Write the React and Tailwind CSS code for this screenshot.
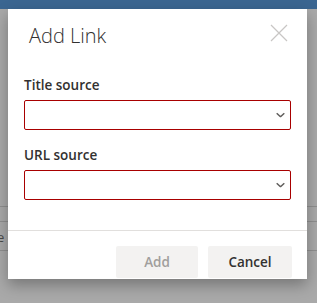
import React from 'react';

const Chevron = () => (
  <svg width="9" height="5" viewBox="0 0 9 5" className="absolute right-[5px] top-1/2 -translate-y-1/2">
    <path d="M0.7 0.7l3.8 3.6 3.8-3.6" fill="none" stroke="#605e5c" strokeWidth="1.5" />
  </svg>
);

const Field = ({ label }) => (
  <div className="flex flex-col">
    <label className="text-[13.5px] font-semibold text-[#323130] leading-[20px] pt-[3px] pb-[5px]">{label}</label>
    <div className="relative h-[30px] border border-[#a80000] rounded-[2px] bg-white">
      <Chevron />
    </div>
  </div>
);

export default function App() {
  return (
    <div
      className="relative w-[317px] h-[303px] overflow-hidden bg-[#a9a9a9]"
      style={{ fontFamily: '"Segoe UI", "Open Sans", sans-serif' }}
    >
      {/* app behind the overlay */}
      <div className="h-[9px] bg-[#3b6691]" />
      <div className="absolute left-0 right-0 top-[206px] border-t border-[#8f8f8f]" />
      <div className="absolute left-0 right-0 top-[221px] border-t border-[#8f8f8f]" />
      <div className="absolute left-0 right-0 top-[250px] border-t border-[#8f8f8f]" />
      <span className="absolute left-[-3px] top-[228px] text-[13px] text-[#4a4a4a]">e</span>

      {/* dialog */}
      <div className="absolute left-[8px] top-[9px] w-[299px] h-[270px] bg-white shadow-[0_6px_14px_rgba(0,0,0,0.3)] flex flex-col">
        <div className="flex items-start justify-between pl-[21px] pr-[19px] pt-[13px]">
          <h1 className="text-[20px] font-light text-[#323130] leading-[28px]">Add Link</h1>
          <svg width="18" height="18" viewBox="0 0 18 18" className="mt-[2px]">
            <path d="M1 1l16 16M17 1L1 17" stroke="#c8c6c4" strokeWidth="1.2" />
          </svg>
        </div>
        <div className="flex flex-col gap-[12px] px-[16px] pt-[22px]">
          <Field label="Title source" />
          <Field label="URL source" />
        </div>
        <div className="mt-auto border-t border-[#e1dfdd] flex justify-end gap-[10px] pt-[15px] pb-[2px] pr-[15px] h-[49px]">
          <button className="w-[82px] h-[32px] bg-[#f3f2f1] text-[13.5px] font-semibold text-[#a19f9d] rounded-[2px]">Add</button>
          <button className="w-[84px] h-[32px] bg-[#f3f2f1] text-[13.5px] font-semibold text-[#323130] rounded-[2px]">Cancel</button>
        </div>
      </div>
    </div>
  );
}
